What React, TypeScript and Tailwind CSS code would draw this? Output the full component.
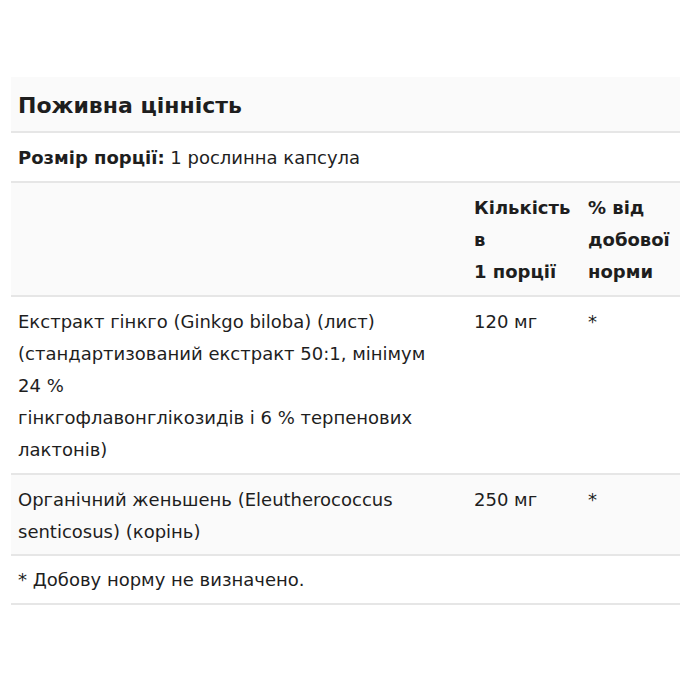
import React from "react";

export default function App() {
  return (
    <div className="w-[700px] h-[700px] bg-white pt-[77px] pl-[11px]" style={{ fontFamily: "'DejaVu Sans', sans-serif" }}>
      <div className="w-[669px] text-[#1e1e1e] text-[18px] leading-[32px]">
        <div className="bg-[#fafafa] border-b-2 border-[#e6e6e6] h-[56px] px-[7px] pt-[3px] flex items-center">
          <span className="font-bold text-[22px]">Поживна цінність</span>
        </div>
        <div className="border-b-2 border-[#e6e6e6] h-[50px] px-[7px] pt-[1px] flex items-center">
          <span><b>Розмір порції:</b> 1 рослинна капсула</span>
        </div>
        <div className="bg-[#fafafa] border-b-2 border-[#e6e6e6] h-[114px] grid grid-cols-[456px_114px_99px] py-[9px] font-bold">
          <div className="px-[7px]"></div>
          <div className="px-[7px]">Кількість<br />в<br />1 порції</div>
          <div className="px-[7px]">% від<br />добової<br />норми</div>
        </div>
        <div className="border-b-2 border-[#e6e6e6] h-[178px] grid grid-cols-[456px_114px_99px] py-[9px]">
          <div className="px-[7px]">Екстракт гінкго (Ginkgo biloba) (лист)<br />(стандартизований екстракт 50:1, мінімум<br />24 %<br />гінкгофлавонглікозидів і 6 % терпенових<br />лактонів)</div>
          <div className="px-[7px]">120 мг</div>
          <div className="px-[7px]">*</div>
        </div>
        <div className="bg-[#fafafa] border-b-2 border-[#e6e6e6] h-[81px] grid grid-cols-[456px_114px_99px] py-[9px]">
          <div className="px-[7px]">Органічний женьшень (Eleutherococcus<br />senticosus) (корінь)</div>
          <div className="px-[7px]">250 мг</div>
          <div className="px-[7px]">*</div>
        </div>
        <div className="border-b-2 border-[#e6e6e6] h-[49px] px-[7px] flex items-center">
          <span>* Добову норму не визначено.</span>
        </div>
      </div>
    </div>
  );
}
